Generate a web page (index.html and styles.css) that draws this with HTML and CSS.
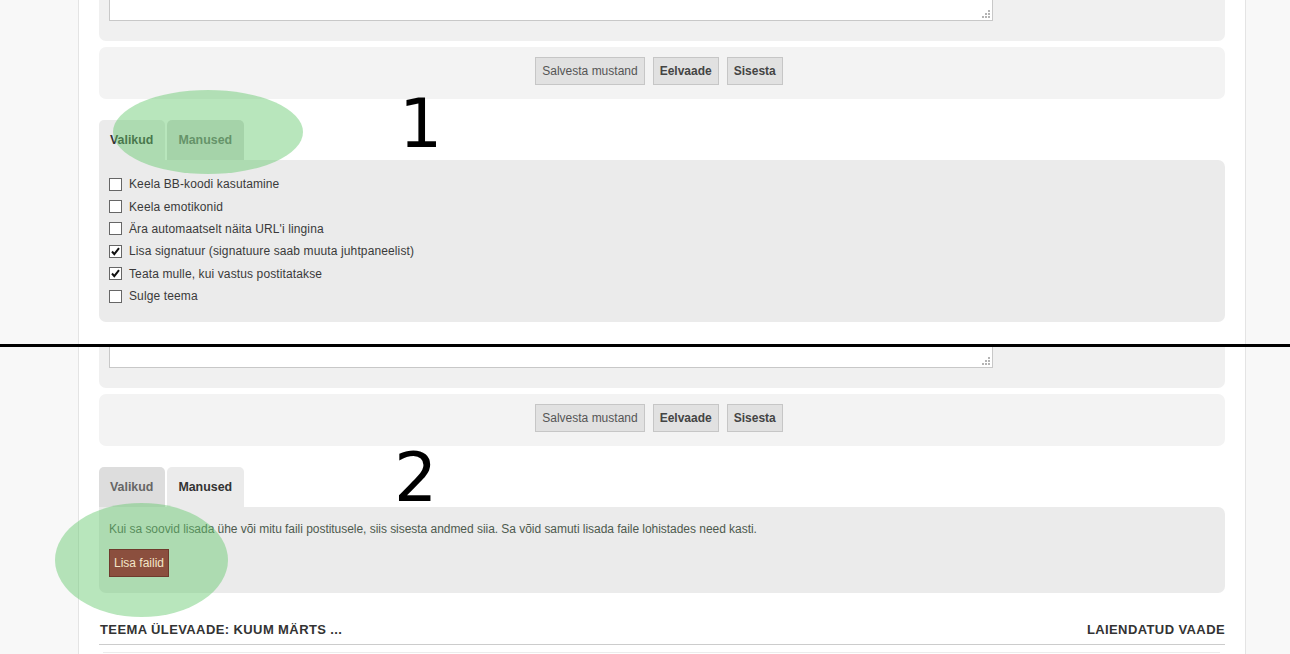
FILE: index.html
```html
<!DOCTYPE html>
<html lang="et">
<head>
    <meta charset="UTF-8">
    <meta name="viewport" content="width=device-width, initial-scale=1.0">
    <title>Postituse valikud ja manused</title>
    <link rel="stylesheet" href="styles.css">
</head>
<body>
    <!-- shot 1: Valikud tab open -->
    <section class="shot shot-one">
        <div class="column">
            <div class="editor-panel">
                <div class="textarea-stub">
                    <svg class="grip" width="8" height="8" viewBox="0 0 8 8"><g fill="#b4b4b4"><rect x="6" y="0" width="2" height="2"/><rect x="3" y="3" width="2" height="2"/><rect x="6" y="3" width="2" height="2"/><rect x="0" y="6" width="2" height="2"/><rect x="3" y="6" width="2" height="2"/><rect x="6" y="6" width="2" height="2"/></g></svg>
                </div>
            </div>
            <div class="button-bar">
                <button class="btn">Salvesta mustand</button>
                <button class="btn btn-bold">Eelvaade</button>
                <button class="btn btn-bold">Sisesta</button>
            </div>

            <div class="tabs">
                <span class="tab active">Valikud</span>
                <span class="tab">Manused</span>
            </div>
            <div class="tab-panel options">
                <label class="option"><span class="box"></span>Keela BB-koodi kasutamine</label>
                <label class="option"><span class="box"></span>Keela emotikonid</label>
                <label class="option"><span class="box"></span>Ära automaatselt näita URL'i lingina</label>
                <label class="option"><span class="box checked"><svg width="11" height="11" viewBox="0 0 11 11"><path d="M2 5.5 L4.3 8.2 L9 2.2" fill="none" stroke="#111" stroke-width="2"/></svg></span>Lisa signatuur (signatuure saab muuta juhtpaneelist)</label>
                <label class="option"><span class="box checked"><svg width="11" height="11" viewBox="0 0 11 11"><path d="M2 5.5 L4.3 8.2 L9 2.2" fill="none" stroke="#111" stroke-width="2"/></svg></span>Teata mulle, kui vastus postitatakse</label>
                <label class="option"><span class="box"></span>Sulge teema</label>
            </div>
        </div>
        <div class="highlight hl-one"></div>
        <div class="step-no no-one">1</div>
    </section>

    <div class="divider"></div>

    <!-- shot 2: Manused tab open -->
    <section class="shot shot-two">
        <div class="column">
            <div class="editor-panel">
                <div class="textarea-stub">
                    <svg class="grip" width="8" height="8" viewBox="0 0 8 8"><g fill="#b4b4b4"><rect x="6" y="0" width="2" height="2"/><rect x="3" y="3" width="2" height="2"/><rect x="6" y="3" width="2" height="2"/><rect x="0" y="6" width="2" height="2"/><rect x="3" y="6" width="2" height="2"/><rect x="6" y="6" width="2" height="2"/></g></svg>
                </div>
            </div>
            <div class="button-bar">
                <button class="btn">Salvesta mustand</button>
                <button class="btn btn-bold">Eelvaade</button>
                <button class="btn btn-bold">Sisesta</button>
            </div>

            <div class="tabs">
                <span class="tab">Valikud</span>
                <span class="tab active">Manused</span>
            </div>
            <div class="tab-panel attachments">
                <p class="hint">Kui sa soovid lisada ühe või mitu faili postitusele, siis sisesta andmed siia. Sa võid samuti lisada faile lohistades need kasti.</p>
                <button class="btn-files">Lisa failid</button>
            </div>

            <div class="review-head">
                <span>TEEMA ÜLEVAADE: KUUM MÄRTS ...</span>
                <span>LAIENDATUD VAADE</span>
            </div>
            <div class="review-line"></div>
        </div>
        <div class="highlight hl-two"></div>
        <div class="step-no no-two">2</div>
    </section>
</body>
</html>
```

FILE: styles.css
```css
body {
    margin: 0;
    padding: 0;
    background-color: #f8f8f8;
    font-family: 'Liberation Sans', Arial, sans-serif;
    font-size: 12px;
    color: #333;
}
.shot {
    position: relative;
    overflow: hidden;
}
.shot-one {
    height: 344px;
}
.shot-two {
    height: 307px;
}
.divider {
    height: 3px;
    background-color: #000;
}
.column {
    box-sizing: border-box;
    margin-left: 78px;
    width: 1168px;
    height: 100%;
    padding: 0 20px;
    background-color: #fff;
    border-left: 1px solid #e4e4e4;
    border-right: 1px solid #e4e4e4;
}
.editor-panel {
    background-color: #f0f0f0;
    border-radius: 0 0 7px 7px;
    padding: 0 10px 20px;
}
.textarea-stub {
    position: relative;
    box-sizing: border-box;
    width: 884px;
    height: 21px;
    background-color: #fff;
    border: 1px solid #c8c8c8;
    border-top: none;
}
.grip {
    position: absolute;
    right: 2px;
    bottom: 2px;
}
.button-bar {
    box-sizing: border-box;
    margin-top: 6px;
    height: 52px;
    padding: 10px 6px 0 0;
    background-color: #f3f3f3;
    border-radius: 7px;
    display: flex;
    justify-content: center;
    align-items: flex-start;
    gap: 8px;
}
.btn {
    height: 28px;
    padding: 0 6px;
    font-family: 'Liberation Sans', Arial, sans-serif;
    font-size: 12px;
    color: #555;
    background-color: #e1e1e1;
    border: 1px solid #c6c6c6;
    border-radius: 0;
}
.btn-bold {
    font-weight: bold;
    color: #444;
}
.tabs {
    margin-top: 21px;
    display: flex;
    gap: 2px;
}
.tab {
    height: 40px;
    line-height: 40px;
    padding: 0 12px 0 11px;
    font-size: 12.4px;
    font-weight: bold;
    color: #666;
    background-color: #dddddd;
    border-radius: 5px 5px 0 0;
}
.tab.active {
    color: #333;
    background-color: #ebebeb;
}
.tab-panel {
    background-color: #ebebeb;
    border-radius: 0 7px 7px 7px;
}
.options {
    padding: 13px 10px 15px;
}
.option {
    display: flex;
    align-items: center;
    height: 22.4px;
    color: #3a3a3a;
    letter-spacing: 0.12px;
}
.box {
    box-sizing: border-box;
    width: 13px;
    height: 13px;
    margin-right: 7px;
    background-color: #fff;
    border: 1px solid #666;
    display: flex;
    align-items: center;
    justify-content: center;
}
.attachments {
    padding: 14px 10px 16px;
}
.hint {
    margin: 0;
    line-height: 16px;
    color: #4e5a4e;
    letter-spacing: -0.04px;
}
.btn-files {
    position: relative;
    z-index: 2;
    margin-top: 12px;
    height: 28px;
    padding: 0 4px;
    font-family: 'Liberation Sans', Arial, sans-serif;
    font-size: 12px;
    color: #f3e6c8;
    background-color: #8b4f3e;
    border: 1px solid #6e3a2c;
    border-radius: 0;
}
.review-head {
    margin-top: 29px;
    padding: 0 0 6px 1px;
    line-height: 16px;
    display: flex;
    justify-content: space-between;
    font-size: 13px;
    letter-spacing: 0.4px;
    font-weight: bold;
    color: #333;
    border-bottom: 1px solid #cccccc;
}
.review-line {
    margin: 7px 5px 0 4px;
    border-top: 1px solid #ececec;
}
.highlight {
    position: absolute;
    z-index: 1;
    border-radius: 50%;
    background-color: rgba(100, 200, 110, 0.46);
}
.hl-one {
    left: 113px;
    top: 90px;
    width: 190px;
    height: 84px;
}
.hl-two {
    left: 55px;
    top: 156px;
    width: 173px;
    height: 114px;
}
.step-no {
    position: absolute;
    font-family: 'DejaVu Sans', sans-serif;
    font-size: 68px;
    line-height: 1;
    color: #000;
}
.no-one {
    left: 399px;
    top: 90px;
}
.no-two {
    left: 394px;
    top: 97px;
}
```
